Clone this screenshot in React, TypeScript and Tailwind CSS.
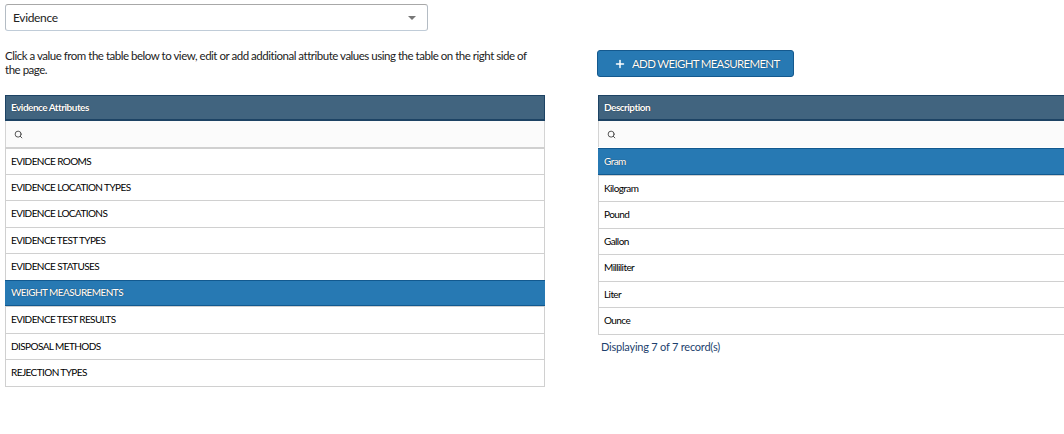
import { Plus, Search } from 'lucide-react'

const attributes = [
  'EVIDENCE ROOMS',
  'EVIDENCE LOCATION TYPES',
  'EVIDENCE LOCATIONS',
  'EVIDENCE TEST TYPES',
  'EVIDENCE STATUSES',
  'WEIGHT MEASUREMENTS',
  'EVIDENCE TEST RESULTS',
  'DISPOSAL METHODS',
  'REJECTION TYPES',
]

const measurements = ['Gram', 'Kilogram', 'Pound', 'Gallon', 'Milliliter', 'Liter', 'Ounce']

function Table({ title, rows, selected }: { title: string; rows: string[]; selected: string }) {
  return (
    <div className="w-full text-[10px] tracking-[-0.58px]">
      <div className="h-[26px] flex items-center px-[5px] bg-[#41647f] border border-[#1d4364] border-b-2 font-bold tracking-[-0.5px] text-white [text-shadow:0_0_1px_rgba(0,0,0,0.7)]">
        {title}
      </div>
      <div className="h-[26px] flex items-center pl-[8px] bg-[#fbfbfb] border-x border-[#d4d4d4]">
        <Search size={9} strokeWidth={2.4} className="text-[#444]" />
      </div>
      <div className="border-x border-b border-[#d0d0d0] bg-[#fbfbfb]">
        {rows.map((row, i) => (
          <div
            key={row}
            className={
              row === selected
                ? `-mx-px h-[26.5px] flex items-center px-[6px] bg-[#2779b3] border-y border-[#12598f] font-medium text-white [text-shadow:0_0_1px_rgba(0,0,0,0.7)] ${i === 0 ? 'mt-px' : ''}`
                : `h-[26.5px] flex items-center px-[5px] bg-white text-black ${i > 0 ? 'border-t' : 'border-t-2'} border-[#d0d0d0]`
            }
          >
            {row}
          </div>
        ))}
      </div>
    </div>
  )
}

export default function App() {
  return (
    <div className="w-[1064px] h-[434px] overflow-hidden bg-white font-['Lato','Liberation_Sans',sans-serif] flex pt-[4px] pl-[5px]">
      <div className="w-[540px] shrink-0">
        <div className="w-[423px] h-[27px] flex items-center justify-between pl-[7px] pr-[11px] border border-[#b4bcc4] border-t-[#a8a8a8] border-b-[#c0ccd8] rounded-[3px] text-[12px] tracking-[-0.35px] text-[#222]">
          Evidence
          <span className="border-x-[4px] border-x-transparent border-t-[4px] border-t-[#777]" />
        </div>
        <p className="mt-[18px] mb-[18px] w-[530px] h-[28px] text-[11.5px] leading-[14px] tracking-[-0.48px] text-[#222]">
          Click a value from the table below to view, edit or add additional attribute values using the table on the right side of the page.
        </p>
        <Table title="Evidence Attributes" rows={attributes} selected="WEIGHT MEASUREMENTS" />
      </div>
      <div className="w-[480px] shrink-0 ml-[52px] pt-[46px]">
        <button className="h-[27px] w-[197px] flex items-center pl-[16px] gap-[6px] whitespace-nowrap bg-[#2779b3] border border-[#14598e] rounded-[3px] text-[11.5px] tracking-[-0.7px] text-white [text-shadow:0_0_1px_rgba(0,0,0,0.7)]">
          <Plus size={12} strokeWidth={3} />
          ADD WEIGHT MEASUREMENT
        </button>
        <div className="mt-[18px] ml-px">
          <Table title="Description" rows={measurements} selected="Gram" />
        </div>
        <div className="mt-[5px] pl-[4px] text-[11px] leading-[14px] tracking-[-0.22px] text-[#1d3f6e]">Displaying 7 of 7 record(s)</div>
      </div>
    </div>
  )
}
